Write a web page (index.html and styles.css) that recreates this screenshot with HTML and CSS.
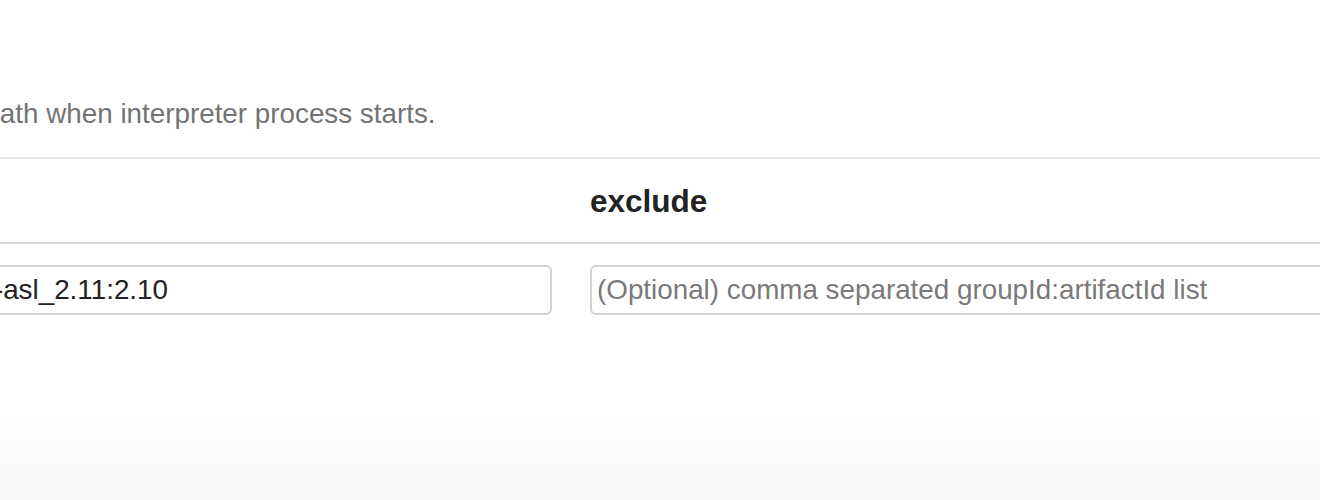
FILE: index.html
```html
<!DOCTYPE html>
<html lang="en">
<head>
<meta charset="utf-8">
<title>Interpreter dependencies</title>
<link rel="stylesheet" href="styles.css">
</head>
<body>
<div class="page">
  <p class="desc">Load dependencies to the interpreter classpath when interpreter process starts.</p>
  <table class="deps">
    <thead>
      <tr>
        <th class="col-artifact">artifact</th>
        <th class="col-exclude">exclude</th>
      </tr>
    </thead>
    <tbody>
      <tr>
        <td><input class="field" type="text" value="org.codehaus.jackson:jackson-mapper-asl_2.11:2.10"></td>
        <td><input class="field" type="text" placeholder="(Optional) comma separated groupId:artifactId list"></td>
      </tr>
    </tbody>
  </table>
</div>
</body>
</html>
```

FILE: styles.css
```css
html {
  background: linear-gradient(to bottom, #ffffff 0, #ffffff 420px, #f8f8f8 500px);
  min-height: 100%;
}
body {
  margin: 0;
  overflow: hidden;
  font-family: "Liberation Sans", Arial, Helvetica, sans-serif;
  color: #333;
}
.page {
  margin-left: -508px;
  width: 2400px;
  padding-top: 94px;
}
.desc {
  margin: 0 0 23px -33px;
  font-size: 27.8px;
  line-height: 40px;
  color: #737373;
  white-space: nowrap;
}
.deps {
  width: 100%;
  border-collapse: collapse;
  table-layout: fixed;
}
.deps th {
  border-top: 2px solid #e6e6e6;
  border-bottom: 2px solid #d8d8d8;
  padding: 22px 19px 21px;
  font-size: 31.5px;
  line-height: 40px;
  font-weight: bold;
  text-align: left;
  color: #222;
}
.col-artifact {
  width: 1041px;
}
.deps td {
  border-top: 1px solid #e2e2e2;
  padding: 21px 19px 20px;
}
.field {
  display: block;
  box-sizing: border-box;
  width: 100%;
  height: 50px;
  margin: 0;
  padding: 0 5px;
  border: 2px solid #d2d2d2;
  border-radius: 6px;
  background: #fff;
  font-family: "Liberation Sans", Arial, Helvetica, sans-serif;
  font-size: 27.8px;
  color: #222;
  outline: none;
}
.field::placeholder {
  color: #7a7a7a;
  opacity: 1;
}
```
